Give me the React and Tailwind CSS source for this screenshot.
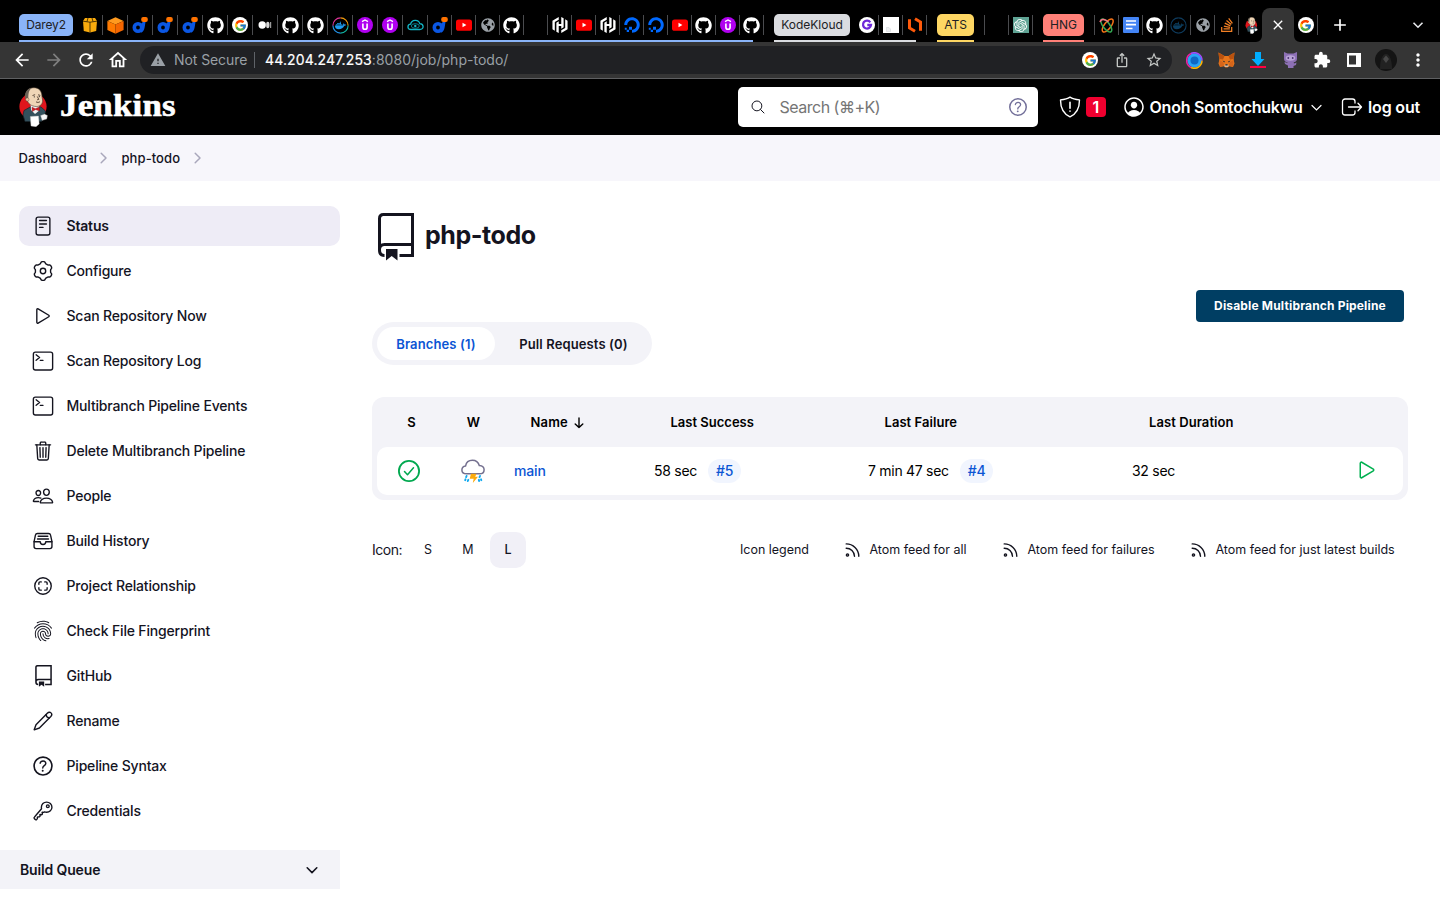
import React from "react";
import {
  IoReaderOutline,
  IoPlayOutline,
  IoTerminalOutline,
  IoTrashOutline,
  IoPeopleOutline,
  IoFileTrayFullOutline,
  IoScanCircleOutline,
  IoFingerPrintOutline,
  IoHelpCircleOutline,
  IoKeyOutline,
  IoPersonCircleOutline,
  IoSearchOutline,
} from "react-icons/io5";
import { FaGithub, FaDigitalOcean, FaDocker, FaGlobeAmericas, FaStackOverflow } from "react-icons/fa";
import { FcGoogle } from "react-icons/fc";
import { SiHashicorp, SiOpenai } from "react-icons/si";
import { MdArrowBack, MdArrowForward, MdRefresh, MdOutlineHome, MdWarning, MdExtension, MdMoreVert, MdAdd, MdClose, MdStarBorder, MdOutlineIosShare } from "react-icons/md";

/* ---------- favicons ---------- */

const Google = () => (
  <span className="flex size-4 items-center justify-center rounded-full bg-white">
    <FcGoogle size={13} />
  </span>
);
const Github = () => <FaGithub size={17} className="text-white" />;
const Youtube = () => (
  <svg width="16" height="16" viewBox="0 0 16 16">
    <rect x="0" y="2.4" width="16" height="11.4" rx="2.6" fill="#f00" />
    <path d="M6.5 5.8v4.4l3.9-2.2z" fill="#fff" />
  </svg>
);
const Globe = () => <FaGlobeAmericas size={14} className="text-[#9aa0a6]" />;
const Boxes = () => (
  <svg width="16" height="16" viewBox="0 0 16 16">
    <path d="M3 1h10l2 3-.8 10L8 15.500 1.800 14 1 4z" fill="#f9ab0d" />
    <path d="M1 4.200 8 5.200l7-1M8 5.200v10.300M6 1 5 4.600M10 1l1 3.600" fill="none" stroke="#2b1d00" strokeWidth=".8" />
  </svg>
);
const Cube = () => (
  <svg width="17" height="17" viewBox="0 0 17 17">
    <path d="M8.5 0.3 16.6 4 8.5 7.6.4 4z" fill="#ff9a1f" />
    <path d="M.4 4 8.5 7.6v9.200L.4 13z" fill="#ff7a00" />
    <path d="M16.6 4 8.5 7.6v9.200l8.100-3.800z" fill="#f56600" />
  </svg>
);
const Darey = () => (
  <svg width="16" height="16" viewBox="0 0 16 16">
    <circle cx="6" cy="10.500" r="3.700" fill="none" stroke="#0b57e3" strokeWidth="3.600" />
    <path d="M9 7.500 11 4.500h2.600l-1 6c-.4 2.500-1.600 4.500-3.600 5.200z" fill="#0b57e3" />
    <rect x="9.200" y="0" width="6.600" height="5" rx="2" fill="#ff7300" />
  </svg>
);
const Medium = () => (
  <svg width="16" height="16" viewBox="0 0 16 16" fill="#fff">
    <circle cx="5.200" cy="8" r="3.700" />
    <ellipse cx="10.800" cy="8" rx="1.700" ry="3.300" fill="#d6d6d6" />
    <rect x="13" y="5" width="1.200" height="6" fill="#9a9a9a" />
  </svg>
);
const DockerRing = ({ dim }) => (
  <span className={dim ? "flex opacity-40" : "flex"}>
    <svg width="17" height="17" viewBox="0 0 17 17">
      <g fill="none" strokeWidth="1.100">
        <path d="M8.500.9a7.600 7.600 0 0 1 7.600 7.600" stroke={dim ? "#2496ed" : "#f59e0b"} />
        <path d="M16.100 8.500a7.600 7.600 0 0 1-7.600 7.600" stroke={dim ? "#2496ed" : "#10b9a5"} />
        <path d="M8.500 16.100A7.600 7.600 0 0 1 .9 8.500" stroke="#2496ed" />
        <path d="M.9 8.500A7.600 7.600 0 0 1 8.500.9" stroke={dim ? "#2496ed" : "#e0359a"} />
      </g>
      <g transform="translate(3 3)">
        <FaDocker size={11} color="#1d9bf0" />
      </g>
    </svg>
  </span>
);
const Udemy = () => (
  <svg width="16" height="16" viewBox="0 0 16 16">
    <circle cx="8" cy="8" r="8" fill="#b000f0" />
    <path d="M5 4.600 8 3l3 1.600" fill="none" stroke="#fff" strokeWidth="1.300" />
    <path d="M5.900 6.500v3.700a2.100 2.100 0 0 0 4.200 0V6.500" fill="none" stroke="#fff" strokeWidth="1.600" />
  </svg>
);
const CloudEye = () => (
  <svg width="17" height="16" viewBox="0 0 17 16" fill="none">
    <path d="M4 12.500C-.2 12.300.2 7.500 3.600 7.200 4.600 2.200 11.600 2 12.800 6.600c4.400.4 4.400 5.900 0 5.900z" stroke="#12b5c4" strokeWidth="1.300" />
    <ellipse cx="8.300" cy="9" rx="4" ry="2.300" stroke="#0d7f8c" />
    <circle cx="8.300" cy="9" r="1.200" fill="#12b5c4" />
  </svg>
);
const Hashi = () => <SiHashicorp size={16} className="text-white" />;
const Ocean = () => <FaDigitalOcean size={16} className="text-[#0069ff]" />;
const KodeG = () => (
  <svg width="16" height="16" viewBox="0 0 16 16">
    <circle cx="8" cy="8" r="8" fill="#fff" />
    <path d="M11.300 5.300A4 4 0 1 0 12 8H8.300" fill="none" stroke="#6d28d9" strokeWidth="2.300" />
  </svg>
);
const Blank = () => (
  <svg width="16" height="16" viewBox="0 0 16 16">
    <path d="M0 0h16v16H0z" fill="#fff" />
    <path d="M3.500 10.500h2.500l1.500 1.500v2.500h-4z" fill="#eef0f2" stroke="#d5d8dc" strokeWidth=".6" />
  </svg>
);
const Hex = () => (
  <svg width="16" height="16" viewBox="0 0 16 16" fill="none" stroke="#ff5a0a" strokeWidth="3">
    <path d="M2.500 2.300v8.700l5.500 3.300" />
    <path d="M13.500 13.700V5L8 1.700" />
  </svg>
);
const ChatGpt = () => (
  <span className="flex size-4 items-center justify-center bg-[#5fa394]">
    <SiOpenai size={13} className="text-white" />
  </span>
);
const Atom = () => (
  <svg width="16" height="16" viewBox="0 0 16 16" fill="none" strokeWidth="1.500">
    <ellipse cx="8.700" cy="8.500" rx="3.300" ry="7.800" transform="rotate(38 8.700 8.500)" stroke="#f97316" />
    <ellipse cx="7.300" cy="8.500" rx="3.300" ry="7.800" transform="rotate(-38 7.300 8.500)" stroke="#34a853" />
    <path d="M1 5C2 1.500 6 2 9.500 5" stroke="#fb7185" />
  </svg>
);
const Docs = () => (
  <svg width="16" height="16" viewBox="0 0 16 16">
    <rect width="16" height="16" rx="1" fill="#4384f5" />
    <path d="M3 4h10M3 7.700h10M3 11.500h6.500" stroke="#fff" strokeWidth="1.700" />
  </svg>
);
const Stack = () => <FaStackOverflow size={16} className="text-[#f48024]" />;

const Butler = ({ w, h }) => (
  <svg width={w} height={h} viewBox="0 0 29 40">
    <circle cx="14" cy="19.500" r="13.600" fill="#e0151c" />
    <path d="M5 23.500 13 19l9 1 4.500 4-1 6-3 4.500H6L4 28z" fill="#33505c" stroke="#17242a" strokeWidth=".7" />
    <path d="M11.500 16l9 1-.8 7-3.700 3-4-4z" fill="#f4f4f4" />
    <path d="M6.600 11C5.500 4.500 9.500.6 15 .7c5.400 0 8 3.800 8 9.300l.6 3c.2 4-2.100 6.500-6.300 6.500-5 0-8.300-3.200-9-6z" fill="#f0d6b7" stroke="#4a3a2c" strokeWidth=".6" />
    <path d="M6.600 11.500C5 5.500 8.500 1.500 12.500 1 9.800 3.500 9.500 6 9.300 10.500l-1 4z" fill="#6b6156" />
    <circle cx="8.300" cy="12.500" r="1.700" fill="#e8c6a2" stroke="#4a3a2c" strokeWidth=".4" />
    <path d="M13.500 8.500l2.600-.8M19 7.800l2.300.6M17 14.800c1.300.9 3 .8 4-.2M18.300 9.500l1.500 2.900-1.700.4" fill="none" stroke="#3b2a1e" strokeWidth=".8" />
    <circle cx="15.300" cy="9.800" r=".6" fill="#222" />
    <circle cx="20.300" cy="9.600" r=".6" fill="#222" />
    <path d="M13 20.200l3.300 1.500 4-1.700.3 4-4-1.500-3.300 2z" fill="#d81920" stroke="#7a0b10" strokeWidth=".4" />
    <path d="M11.300 29.500l8.200-.5.7 8-3.200 2.700-5-.7z" fill="#fff" stroke="#b9b9b9" strokeWidth=".4" />
    <path d="M21.500 28.500l4-1.500 3 1.500-.7 3.500-4.800 1.500z" fill="#f7f7f7" stroke="#777" strokeWidth=".4" />
  </svg>
);
const ButlerTab = () => <Butler w={13} h={17} />;

/* ---------- browser chrome ---------- */

const Sep = () => <span className="h-5 w-px shrink-0 bg-[#4a4b4e]" />;

const Tab = ({ icon: Icon, wide, last }) => (
  <span className={`flex h-6 shrink-0 items-center ${wide ? "w-[25px]" : "w-6"}`}>
    <span className="flex flex-1 items-center justify-center">{Icon ? <Icon /> : null}</span>
    {last ? null : <Sep />}
  </span>
);

const groupOneWide = [Boxes, Cube, Darey, Darey, Darey, Github, Google, Medium, Github, Github, DockerRing, Udemy, Udemy, CloudEye];
const groupOneSlim = [Darey, Youtube, Globe, Github, null, Hashi, Youtube, Hashi, Ocean, Ocean, Youtube, Github, Udemy, Github];
const DimDocker = () => <DockerRing dim />;
const tailTabs = [Atom, Docs, Github, DimDocker, Globe, Stack, ButlerTab];

const Chip = ({ className, children }) => (
  <span className={`flex h-[22px] shrink-0 items-center justify-center rounded-[5px] text-[12px] text-[#202124] ${className}`}>{children}</span>
);

const TabStrip = () => (
  <div className="flex h-[42px] shrink-0 items-center bg-black pt-2 pl-[19px]">
    <div className="relative flex h-[34px] shrink-0 items-center gap-[5px]">
      <Chip className="w-[54px] bg-[#8ab4f8] tracking-[-0.150px]">Darey2</Chip>
      <div className="flex">
        {groupOneWide.map((icon, i) => <Tab key={i} icon={icon} wide />)}
        {groupOneSlim.map((icon, i) => <Tab key={i} icon={icon} />)}
      </div>
      <span className="absolute bottom-0 left-0 h-0.5 w-[734px] bg-[#8ab4f8]" />
    </div>
    <div className="relative ml-2.5 flex h-[34px] shrink-0 items-center gap-[5px]">
      <Chip className="w-[76px] bg-[#dadce0]">KodeKloud</Chip>
      <div className="flex">
        <Tab icon={KodeG} />
        <Tab icon={Blank} />
        <Tab icon={Hex} />
      </div>
      <span className="absolute bottom-0 left-0 h-0.5 w-[142px] bg-[#dadce0]" />
    </div>
    <div className="relative ml-2.5 flex h-[34px] shrink-0 items-center">
      <Chip className="w-[37px] bg-[#fdd663]">ATS</Chip>
      <span className="absolute bottom-0 left-0 h-0.5 w-full bg-[#fdd663]" />
    </div>
    <div className="ml-2.5 flex shrink-0 items-center">
      <Sep />
      <Tab />
      <Tab icon={ChatGpt} />
    </div>
    <div className="relative ml-2.5 flex h-[34px] shrink-0 items-center">
      <Chip className="w-[41px] bg-[#ff8078]">HNG</Chip>
      <span className="absolute bottom-0 left-0 h-0.5 w-full bg-[#ff8078]" />
    </div>
    <div className="ml-2.5 flex shrink-0 items-center">
      <Sep />
      {tailTabs.map((icon, i) => <Tab key={i} icon={icon} last={i === tailTabs.length - 1} />)}
    </div>
    <div className="relative -ml-px flex h-[34px] w-8 shrink-0 items-center justify-center rounded-t-lg bg-[#353535] text-white">
      <MdClose size={16} />
      <svg className="absolute bottom-0 -left-1.5" width="6" height="6" viewBox="0 0 6 6">
        <path d="M6 0v6H0a6 6 0 0 0 6-6z" fill="#353535" />
      </svg>
      <svg className="absolute -right-1.5 bottom-0" width="6" height="6" viewBox="0 0 6 6">
        <path d="M0 0v6h6a6 6 0 0 1-6-6z" fill="#353535" />
      </svg>
    </div>
    <Tab icon={Google} />
    <MdAdd size={20} className="ml-3 shrink-0 text-white" />
    <svg className="ml-[62px] shrink-0" width="12" height="12" viewBox="0 0 12 12" fill="none" stroke="#e8eaed" strokeWidth="1.600">
      <path d="M1.500 3.800 6 8.200l4.500-4.400" />
    </svg>
  </div>
);

const Cell = ({ children, className = "" }) => <span className={`flex w-8 shrink-0 items-center justify-center ${className}`}>{children}</span>;

const Orb = () => (
  <svg width="17" height="17" viewBox="0 0 17 17">
    <circle cx="8.500" cy="8.500" r="7.200" fill="#2aa3f5" />
    <circle cx="8.500" cy="8.500" r="4" fill="#0f68c4" />
    <path d="M5 1.500a7.800 7.800 0 0 0 0 14" fill="none" stroke="#f01fa0" strokeWidth="1.500" />
    <path d="M5 15.500a7.700 7.700 0 0 0 11-7" fill="none" stroke="#ffb300" strokeWidth="1.500" />
    <path d="M16 8.500a7.700 7.700 0 0 0-11-7" fill="none" stroke="#a04dff" strokeWidth="1.500" />
  </svg>
);
const Fox = () => (
  <svg width="17" height="16" viewBox="0 0 17 16">
    <path d="M.5.500 6.500 4h4l6-3.500-.8 7.500.8 3.500-1.500 3.500-4-.8-1.500 1.300h-2L6 14.200l-4 .8L.5 11.500 1.300 8z" fill="#e8761b" />
    <path d="M1.300 8l3.700 2 1.200 3.600L2 15M15.700 8 12 10l-1.200 3.600L15 15" fill="#d5651a" />
    <path d="M.5.500 6.500 4 5 7.500 1.300 7zM16.500.5 10.500 4 12 7.500l3.700-.5z" fill="#b9520f" />
    <path d="M4.500 8.500 7 9.500l-.8 1zM12.500 8.500 10 9.500l.8 1z" fill="#1f2937" />
    <path d="M6.800 12.500h3.400l.3 2.300h-4z" fill="#d9cfc4" />
    <path d="M7.300 12.300h2.400v1.200H7.300z" fill="#161616" />
  </svg>
);
const Download = () => (
  <svg width="16" height="16" viewBox="0 0 16 16">
    <path d="M5 0h6v7h3.500L8 14 1.500 7H5z" fill="#00aeff" />
    <rect y="14" width="16" height="2" fill="#ff0040" />
  </svg>
);
const Octo = () => (
  <svg width="15" height="17" viewBox="0 0 15 17">
    <path d="M1 0l3.500 1.500h6L14 0v7c0 2-1.500 3-3.300 3.300L11 11.500l2.500-1-.5 2.500-2.500 1V16H5v-2.500L2 12l-.5-2 3 1-.2-.7C2.500 10 1 9 1 7z" fill="#8d70b5" />
    <ellipse cx="7.500" cy="6" rx="4.800" ry="2.700" fill="#b9a3d6" />
    <circle cx="5.300" cy="6" r=".9" fill="#4b3271" />
    <circle cx="9.700" cy="6" r=".9" fill="#4b3271" />
  </svg>
);

const Toolbar = () => (
  <div className="flex h-[37px] shrink-0 items-center border-b border-[#5f6062] bg-[#353535] pl-1.5 text-white">
    <Cell><MdArrowBack size={20} /></Cell>
    <Cell><MdArrowForward size={20} className="text-[#7f7f7f]" /></Cell>
    <Cell><MdRefresh size={20} /></Cell>
    <Cell><MdOutlineHome size={22} /></Cell>
    <div className="ml-1.5 flex h-7 w-[1032px] shrink-0 items-center rounded-full bg-[#202124] pr-0.5 pl-2.5">
      <MdWarning size={16} className="shrink-0 text-[#9aa0a6]" />
      <span className="ml-2 w-[74px] pb-0.5 text-[14px] tracking-[-0.080px] whitespace-nowrap text-[#9aa0a6]">Not Secure</span>
      <span className="ml-1.5 h-4 w-px bg-[#5f6368]" />
      <span className="ml-2.5 flex-1 pb-0.5 text-[14px] tracking-[0.020px] text-[#9aa0a6]">
        <span className="tracking-[0.140px] text-white [-webkit-text-stroke:0.2px_white]">44.204.247.253</span>:8080/job/php-todo/
      </span>
      <Cell><Google /></Cell>
      <Cell><MdOutlineIosShare size={16} className="text-[#c4c7c5]" /></Cell>
      <Cell><MdStarBorder size={18} className="text-[#c4c7c5]" /></Cell>
    </div>
    <Cell className="ml-1.5"><Orb /></Cell>
    <Cell><Fox /></Cell>
    <Cell><Download /></Cell>
    <Cell><Octo /></Cell>
    <Cell><MdExtension size={18} /></Cell>
    <Cell>
      <svg width="14" height="14" viewBox="0 0 14 14">
        <path fillRule="evenodd" d="M0 0h14v14H0zM2 2.500v9h7v-9z" fill="#fff" />
      </svg>
    </Cell>
    <Cell>
      <svg width="22" height="22" viewBox="0 0 22 22">
        <circle cx="11" cy="11" r="11" fill="#141414" />
        <path d="M5 20C5 12 7 5 11 5s6 7 6 15z" fill="#222" />
        <path d="M11 6.500 14 10l-3 4-3-4z" fill="#484848" />
      </svg>
    </Cell>
    <Cell><MdMoreVert size={20} /></Cell>
  </div>
);

/* ---------- Jenkins header ---------- */

const JenkinsHeader = () => (
  <header className="flex h-14 shrink-0 items-center bg-black pl-[19px] text-[16px] font-semibold text-white">
    <Butler w={29} h={40} />
    <span className="mt-[-4px] ml-3 w-[118px] origin-left scale-x-[1.090] font-['Liberation_Serif',serif] text-[32px] leading-10 font-bold tracking-[0.200px] [-webkit-text-stroke:0.6px_white]">Jenkins</span>
    <div className="ml-[560px] flex h-10 w-[300px] shrink-0 items-center rounded-[5px] bg-white pr-2.5 pl-3">
      <IoSearchOutline size={16} className="text-[#14141f]" />
      <span className="ml-[13.500px] flex-1 text-[16px] font-normal tracking-[-0.500px] text-[#757575]">Search (⌘+K)</span>
      <IoHelpCircleOutline size={24} className="-mr-0.5 text-[#73709a]" />
    </div>
    <svg className="ml-[21px] shrink-0" width="22" height="22" viewBox="0 0 22 22" fill="none" stroke="#fff" strokeWidth="1.400" strokeLinecap="round" strokeLinejoin="round">
      <path d="M11 1.200C8.500 2.900 5 3.600 1.500 3.900c0 8 2.500 13.600 9.500 16.900 7-3.300 9.500-8.900 9.500-16.900C17 3.600 13.500 2.900 11 1.200z" />
      <path d="M11 6.200v6M11 15v.3" strokeWidth="1.600" />
    </svg>
    <span className="ml-[5px] flex h-5 w-5 shrink-0 items-center justify-center rounded-[4px] bg-[#f0002f] text-[16px]">1</span>
    <IoPersonCircleOutline size={24} className="ml-4 shrink-0" />
    <span className="ml-[3.500px] w-[154px] shrink-0 tracking-[-0.230px] whitespace-nowrap">Onoh Somtochukwu</span>
    <svg className="ml-[7px] shrink-0" width="11" height="11" viewBox="0 0 11 11" fill="none" stroke="#fff" strokeWidth="1.200" strokeLinecap="round">
      <path d="M1 3.500 5.500 8 10 3.500" />
    </svg>
    <svg className="ml-[19px] shrink-0" width="22" height="22" viewBox="0 0 22 22" fill="none" stroke="#fff" strokeWidth="1.300" strokeLinecap="round" strokeLinejoin="round">
      <path d="M14 7V5.500A2.500 2.500 0 0 0 11.500 3H4A2.500 2.500 0 0 0 1.500 5.500v11A2.500 2.500 0 0 0 4 19h7.500a2.500 2.500 0 0 0 2.500-2.500V15M7.500 11h12.700M17 7.300l3.500 3.700-3.500 3.700" />
    </svg>
    <span className="ml-[5.500px] tracking-[-0.150px] whitespace-nowrap">log out</span>
  </header>
);

const Crumb = () => (
  <svg width="8" height="12" viewBox="0 0 8 12" fill="none" stroke="#a9a7bb" strokeWidth="1.500" strokeLinecap="round" strokeLinejoin="round">
    <path d="M1.200 1.200 6 6l-4.800 4.800" />
  </svg>
);

/* ---------- sidebar ---------- */

const BookIcon = ({ w, h, stroke }) => (
  <svg width={w} height={h} viewBox="0 0 36 48" fill="none" stroke="currentColor" strokeWidth={stroke}>
    <path d="M6.500 42.500C3 42.500 1.500 40 1.500 37V5.500q0-4 4-4h29v41H21.500M1.500 36.500q0-5 5-5h28" />
    <path d="M8 36h11.500v11.500L13.700 43 8 47.500z" fill="currentColor" stroke="none" />
  </svg>
);
const PencilIcon = () => (
  <svg width="20" height="20" viewBox="0 0 20 20" fill="none" stroke="currentColor" strokeWidth="1.400" strokeLinejoin="round" strokeLinecap="round">
    <path d="M1.200 18.800 3 13.700 14.300 2.200c2.700-2.700 6 .7 3.500 3.400L6.400 17z" />
    <path d="M13 3.600C13.300 5.500 14.500 6.700 16.400 7" />
  </svg>
);

/* Six soft lobes around the hub, the first one pointing up. */
const gearPath =
  Array.from({ length: 96 }, (_, i) => {
    const a = (i / 96) * Math.PI * 2;
    const r = 8.500 + 0.950 * Math.tanh(2 * Math.cos(6 * a));
    return `${i ? "L" : "M"}${(11 + r * Math.sin(a)).toFixed(2)} ${(11 - r * Math.cos(a)).toFixed(2)}`;
  }).join("") + "Z";
const GearIcon = () => (
  <svg width="22" height="22" viewBox="0 0 22 22" fill="none" stroke="currentColor" strokeWidth="1.400" strokeLinejoin="round">
    <path d={gearPath} />
    <circle cx="11" cy="11" r="2.700" />
  </svg>
);
const BookSmall = () => <BookIcon w={17} h={22} stroke={3.3} />;
const HelpIcon = () => <IoHelpCircleOutline size={26} className="shrink-0" />;

const items = [
  ["Status", IoReaderOutline],
  ["Configure", GearIcon],
  ["Scan Repository Now", IoPlayOutline],
  ["Scan Repository Log", IoTerminalOutline],
  ["Multibranch Pipeline Events", IoTerminalOutline],
  ["Delete Multibranch Pipeline", IoTrashOutline],
  ["People", IoPeopleOutline],
  ["Build History", IoFileTrayFullOutline],
  ["Project Relationship", IoScanCircleOutline],
  ["Check File Fingerprint", IoFingerPrintOutline],
  ["GitHub", BookSmall],
  ["Rename", PencilIcon],
  ["Pipeline Syntax", HelpIcon],
  ["Credentials", IoKeyOutline],
];

const Sidebar = () => (
  <aside className="w-[340px] shrink-0 pt-[25px]">
    <nav className="flex flex-col gap-[5px] pl-[19px] text-[14px] font-medium text-[#14141f]">
      {items.map(([label, Icon], i) => (
        <div key={label} className={`flex h-10 items-center rounded-[10px] pl-3 ${i === 0 ? "bg-[#eeecf6] font-semibold" : ""}`}>
          <span className="flex w-6 justify-center">
            <Icon size={22} />
          </span>
          <span className="mb-px ml-[11.500px] tracking-[-0.180px]">{label}</span>
        </div>
      ))}
    </nav>
    <div className="mt-[19px] flex h-[39px] items-center justify-between bg-[#f3f3f8] pr-[22px] pl-5 text-[14px] font-semibold text-[#14141f]">
      <span className="tracking-[-0.150px]">Build Queue</span>
      <svg width="12" height="12" viewBox="0 0 12 12" fill="none" stroke="currentColor" strokeWidth="1.600" strokeLinecap="round" strokeLinejoin="round">
        <path d="M1.200 3.800 6 8.600l4.800-4.800" />
      </svg>
    </div>
  </aside>
);

/* ---------- main ---------- */

const grid = "grid grid-cols-[64px_64px_140px_214px_264px_1fr] items-center";

const Storm = () => (
  <svg width="24" height="24" viewBox="0 0 24 24" fill="none">
    <path d="M5.600 14.800C2.500 14.800.9 13 .9 10.900c0-2.200 1.600-3.700 3.700-4C5.200 3.400 8 1.300 11.400 1.300c3.600 0 6 2.200 6.900 5.200 2.900.2 4.800 1.900 4.800 4.200 0 2.400-1.900 4.100-4.500 4.100z" stroke="#74708f" strokeWidth="1.500" />
    <path d="M10 14.800h5.500l-1.300 3H17l-5.200 6.200.9-4.300H8.700z" fill="#fbaa0c" />
    <path d="M5.600 17l-.5 1.200M7.300 20.800l-.5 1.200M19 17l-.5 1.200M17.800 20.800l.3 1.200M20 20.300l.3.900M4.500 20.300l-.3.900" stroke="#0fa9f0" strokeWidth="1.900" strokeLinecap="round" />
  </svg>
);
const Rss = () => (
  <svg className="shrink-0" width="15" height="14" viewBox="0 0 15 14" fill="none" stroke="currentColor" strokeWidth="1.400" strokeLinecap="round">
    <path d="M1.200.9A12.500 12.500 0 0 1 13.800 13.200M1.200 5.200a8.200 8.200 0 0 1 8.300 8" />
    <circle cx="2.500" cy="12" r="1.100" />
  </svg>
);
const Build = ({ children }) => (
  <span className="ml-[11px] inline-flex h-6 items-center rounded-full bg-[#f1f5fe] px-[8px] font-medium text-[#0b55d4]">{children}</span>
);
const Feed = ({ children, className }) => (
  <span className={`flex items-center gap-[9.500px] whitespace-nowrap ${className}`}>
    <Rss />
    <span>{children}</span>
  </span>
);

const Main = () => (
  <main className="flex-1 pr-8 pl-8 text-[#14141f]">
    <div className="flex h-[110px] items-start pt-8 pl-1.5">
      <BookIcon w={36} h={48} stroke={3} />
      <h1 className="ml-[11px] pt-[3px] text-[25px] leading-[38px] font-bold tracking-[-0.420px]">php-todo</h1>
    </div>
    <div className="flex h-8 items-center justify-end pr-1">
      <button className="mt-[-2px] h-8 w-[208px] rounded-[4px] bg-[#003e63] text-[12px] font-bold tracking-[0.170px] whitespace-nowrap text-white">Disable Multibranch Pipeline</button>
    </div>
    <div className="mt-[-1px] flex h-[43px] w-[280px] items-center rounded-full bg-[#f3f3f8] p-[5px] text-[13px] font-semibold tracking-[0.120px]">
      <span className="flex h-[33px] w-[118px] items-center justify-center rounded-full bg-white pt-0.5 text-[#0b55d4]">Branches (1)</span>
      <span className="flex h-[33px] flex-1 items-center justify-center pt-0.5 pl-[5px]">Pull Requests (0)</span>
    </div>
    <div className="mt-8 h-[103px] rounded-xl bg-[#f3f3f8] px-[5px] text-black">
      <div className={`${grid} h-[50px] pt-0.5 text-[13px] font-semibold`}>
        <span className="pl-[5px] text-center">S</span>
        <span className="pl-px text-center">W</span>
        <span className="flex items-center gap-1.5 pl-[25.500px] tracking-[0.150px]">
          Name
          <svg width="10" height="12" viewBox="0 0 10 12" fill="none" stroke="currentColor" strokeWidth="1.400" strokeLinecap="round" strokeLinejoin="round">
            <path d="M5 1v9.500M1.200 6.900l3.800 3.700 3.800-3.700" />
          </svg>
        </span>
        <span className="pl-[25.500px]">Last Success</span>
        <span className="pl-[25.500px] tracking-[0.050px]">Last Failure</span>
        <span className="pl-[26px] tracking-[0.080px]">Last Duration</span>
      </div>
      <div className={`${grid} h-12 rounded-[10px] bg-white text-[14px] tracking-[-0.280px]`}>
        <span className="flex justify-center">
          <svg width="22" height="22" viewBox="0 0 22 22" fill="none" stroke="#00a84f" strokeLinecap="round" strokeLinejoin="round">
            <circle cx="11" cy="11" r="10.100" strokeWidth="1.800" />
            <path d="M6.500 11.500l3 3.300 6-7" strokeWidth="1.500" />
          </svg>
        </span>
        <span className="flex justify-center"><Storm /></span>
        <span className="pb-0.5 pl-[9px] font-medium tracking-[-0.150px] text-[#0b55d4]">main</span>
        <span className="flex items-center pl-[9px]"><span className="pb-0.5">58 sec</span><Build><span className="pb-0.5">#5</span></Build></span>
        <span className="flex items-center pl-[9px]"><span className="pb-0.5">7 min 47 sec</span><Build><span className="pb-0.5">#4</span></Build></span>
        <span className="flex items-center justify-between pr-6 pl-[9px]">
          <span className="pb-0.5">32 sec</span>
          <IoPlayOutline size={24} className="-mt-0.5 text-[#00b050]" />
        </span>
      </div>
    </div>
    <div className="mt-8 flex h-9 items-center text-[12.500px] tracking-[-0.020px]">
      <span className="w-[38px] pb-px text-[14px] tracking-[-0.450px]">Icon:</span>
      <span className="flex size-9 items-center justify-center">S</span>
      <span className="ml-1 flex size-9 items-center justify-center">M</span>
      <span className="ml-1 flex size-9 items-center justify-center rounded-[10px] bg-[#f1f0f7] font-medium">L</span>
      <div className="ml-[214px] flex items-center">
        <span className="w-[69px] whitespace-nowrap">Icon legend</span>
        <Feed className="ml-9 w-[122px]">Atom feed for all</Feed>
        <Feed className="ml-9 w-[152px]">Atom feed for failures</Feed>
        <Feed className="ml-9 w-[204px]">Atom feed for just latest builds</Feed>
      </div>
    </div>
  </main>
);

export default function App() {
  return (
    <div className="flex h-[900px] w-[1440px] flex-col overflow-hidden bg-white font-[Inter,'DejaVu_Sans',sans-serif]">
      <TabStrip />
      <Toolbar />
      <JenkinsHeader />
      <div className="flex h-[46px] shrink-0 items-center bg-[#f7f6fb] pl-[18.500px] text-[13px] font-medium text-[#14141f]">
        <span className="w-[81px] pt-0.5 tracking-[0.050px]">Dashboard</span>
        <Crumb />
        <span className="ml-[14px] w-[72px] pt-0.5 tracking-[0.080px]">php-todo</span>
        <Crumb />
      </div>
      <div className="flex flex-1">
        <Sidebar />
        <Main />
      </div>
    </div>
  );
}
